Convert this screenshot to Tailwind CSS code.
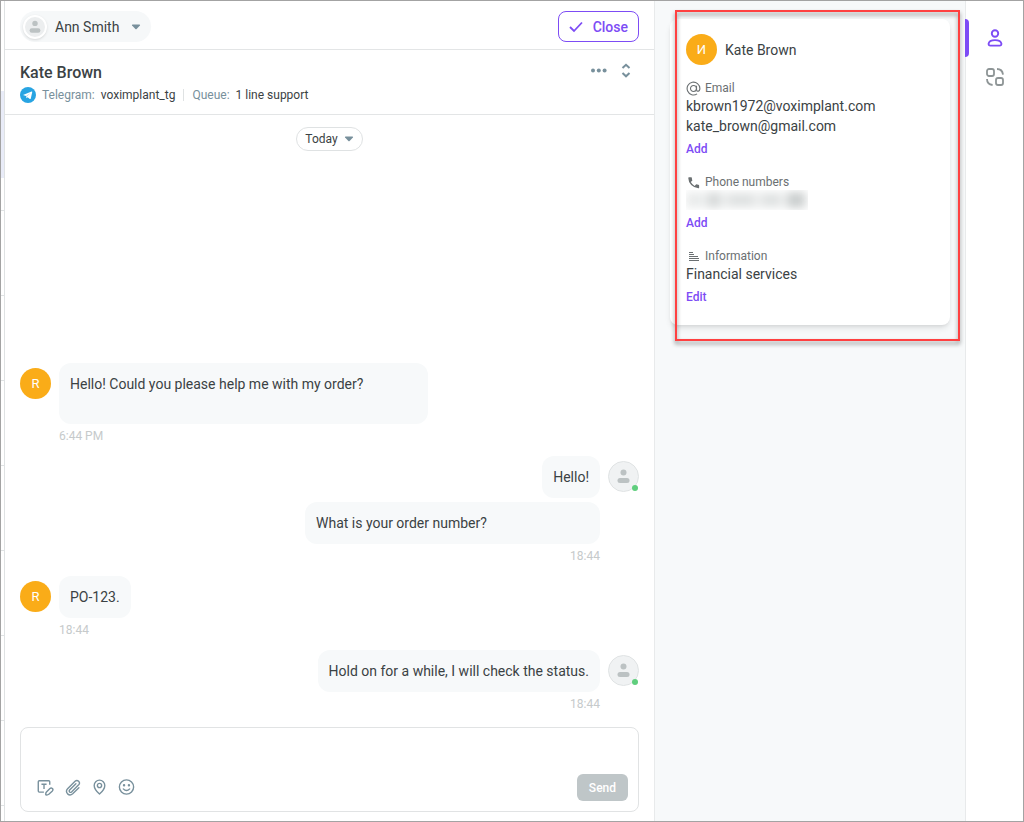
<!DOCTYPE html>
<html lang="en">
<head>
<meta charset="utf-8">
<meta name="viewport" content="width=device-width, initial-scale=1">
<title>Conversation with Kate Brown</title>
<script src="https://cdn.jsdelivr.net/npm/@tailwindcss/browser@4"></script>
</head>
<body class="flex min-h-screen border border-[#a3a3a3] bg-white font-['Roboto',sans-serif] text-sm leading-5 text-[#3b4244]">
<svg class="hidden" aria-hidden="true">
  <symbol id="person" viewBox="0 0 31 31">
    <circle cx="15.5" cy="11.5" r="3" fill="#bcc2c3"/>
    <rect x="9.5" y="17" width="12" height="5" rx="2.5" fill="#bcc2c3"/>
  </symbol>
</svg>

<!-- Edge of the conversation list -->
<div class="flex w-1 shrink-0 flex-col overflow-hidden border-r border-[#dfe2e3] bg-white" aria-hidden="true">
  <div class="h-[90px] shrink-0"></div>
  <div class="h-[87px] shrink-0 bg-[#e9ecf8]"></div>
  <div class="h-[33px] shrink-0 border-b border-[#dfe2e3]"></div>
  <div class="h-[85px] shrink-0 border-b border-[#dfe2e3]"></div>
  <div class="h-[85px] shrink-0 border-b border-[#dfe2e3]"></div>
  <div class="h-[85px] shrink-0 border-b border-[#dfe2e3]"></div>
  <div class="h-[85px] shrink-0 border-b border-[#dfe2e3]"></div>
  <div class="h-[85px] shrink-0 border-b border-[#dfe2e3]"></div>
  <div class="h-[85px] shrink-0 border-b border-[#dfe2e3]"></div>
  <div class="h-[85px] shrink-0 border-b border-[#dfe2e3]"></div>
</div>

<main class="flex min-w-0 flex-1 flex-col">
  <header class="flex h-[49px] items-center justify-between border-b border-[#e3e5e6] px-[15px] pt-[3px]">
    <button type="button" class="flex h-[31px] items-center rounded-full bg-[#f6f8f9] pr-2.5 pl-[3px]">
      <span class="flex size-6 items-center justify-center rounded-full border-2 border-white bg-[#eceeef] shadow">
        <svg class="size-7 shrink-0" aria-hidden="true"><use href="#person"/></svg>
      </span>
      <span class="ml-2">Ann Smith</span>
      <svg class="ml-3 h-1.5 w-2.5" viewBox="0 0 10 6" fill="#78909c" aria-hidden="true"><path d="M1.500.5h7q1 .3.400 1L5.600 5.100q-.6.500-1.200 0L1.100 1.500Q.5.800 1.500.5z"/></svg>
    </button>
    <button type="button" class="flex h-[31px] items-center gap-2 rounded-lg border border-[#7d4cf5] px-2.5 font-medium text-[#7d4cf5]">
      <svg class="h-4 w-4" viewBox="0 0 16 16" fill="none" stroke="currentColor" stroke-width="1.800" aria-hidden="true"><path d="M1 8l4 4L13 3.500"/></svg>
      Close
    </button>
  </header>

  <section class="flex h-[65px] items-start justify-between border-b border-[#e3e5e6] pt-[13px] pr-[22px] pl-[15px]">
    <div>
      <h1 class="text-base leading-5 font-medium">Kate Brown</h1>
      <p class="mt-1 flex h-4 items-center text-xs leading-4">
        <svg class="mr-1.5 size-4" viewBox="0 0 16 16" aria-hidden="true"><circle cx="8" cy="8" r="8" fill="#28a4e2"/><path d="M3 7.900l8.600-3.400q.8-.2.6.7l-1.400 6.300q-.3.900-1 .4L7.600 10.300l-1.100 1-.5-2.300z" fill="#fff"/><path d="M6 9l4.500-3-3.600 3.500-.4 1.800z" fill="#a9d8f2"/></svg>
        <span class="text-[#78909c]">Telegram:</span>
        <span class="ml-1.5">voximplant_tg</span>
        <span class="mx-2 h-3 w-px bg-[#dfe2e3]"></span>
        <span class="text-[#78909c]">Queue:</span>
        <span class="ml-1.5">1 line support</span>
      </p>
    </div>
    <div class="flex items-center gap-3 text-[#78909c]">
      <button type="button" aria-label="More actions"><svg class="h-[18px] w-[18px]" viewBox="0 0 18 18" fill="currentColor" aria-hidden="true"><circle cx="3" cy="7.500" r="2"/><circle cx="8.800" cy="7.500" r="2"/><circle cx="14.600" cy="7.500" r="2"/></svg></button>
      <button type="button" aria-label="Expand"><svg class="h-[18px] w-3" viewBox="0 0 12 18" fill="none" stroke="currentColor" stroke-width="2" aria-hidden="true"><path d="M2.500 5L6 1.800 9.500 5M2.500 10L6 13.300 9.500 10"/></svg></button>
    </div>
  </section>

  <section class="flex flex-1 flex-col px-[15px] pt-3 pb-[9px]" aria-label="Messages">
    <button type="button" class="flex h-6 items-center gap-1.5 self-center rounded-full border border-[#dfe2e3] px-2 text-xs">
      Today
      <svg class="h-1.5 w-2.5" viewBox="0 0 10 6" fill="#78909c" aria-hidden="true"><path d="M1.500.5h7q1 .3.400 1L5.600 5.100q-.6.500-1.200 0L1.100 1.500Q.5.800 1.500.5z"/></svg>
    </button>

    <div class="mt-auto flex flex-col gap-3">
      <article class="flex items-start gap-2">
        <span class="mt-[5px] flex size-[31px] items-center justify-center rounded-full bg-[#faac18] text-[13px] text-white">R</span>
        <div>
          <p class="h-[61px] w-[369px] rounded-xl bg-[#f7f9fa] px-[11px] pt-[11px]">Hello! Could you please help me with my order?</p>
          <time class="mt-1 block text-xs leading-4 text-[#c6cacb]">6:44 PM</time>
        </div>
      </article>

      <article class="flex items-start justify-end gap-2">
        <div class="flex flex-col items-end">
          <p class="rounded-xl bg-[#f7f9fa] px-[11px] py-[11px]">Hello!</p>
          <p class="mt-1 w-[295px] rounded-xl bg-[#f7f9fa] px-[11px] py-[11px]">What is your order number?</p>
          <time class="mt-1 block text-xs leading-4 text-[#c6cacb]">18:44</time>
        </div>
        <span class="relative mt-[5px] size-[31px] rounded-full border border-[#e0e3e4] bg-[#f0f2f3]">
          <svg class="-m-px size-[31px]" aria-hidden="true"><use href="#person"/></svg>
          <span class="absolute right-0 bottom-0 size-1.5 rounded-full bg-[#5fce7d]"></span>
        </span>
      </article>

      <article class="flex items-start gap-2">
        <span class="mt-[5px] flex size-[31px] items-center justify-center rounded-full bg-[#faac18] text-[13px] text-white">R</span>
        <div>
          <p class="rounded-xl bg-[#f7f9fa] px-[11px] py-[11px]">PO-123.</p>
          <time class="mt-1 block text-xs leading-4 text-[#c6cacb]">18:44</time>
        </div>
      </article>

      <article class="flex items-start justify-end gap-2">
        <div class="flex flex-col items-end">
          <p class="rounded-xl bg-[#f7f9fa] px-[11px] py-[11px]">Hold on for a while, I will check the status.</p>
          <time class="mt-1 block text-xs leading-4 text-[#c6cacb]">18:44</time>
        </div>
        <span class="relative mt-[5px] size-[31px] rounded-full border border-[#e0e3e4] bg-[#f0f2f3]">
          <svg class="-m-px size-[31px]" aria-hidden="true"><use href="#person"/></svg>
          <span class="absolute right-0 bottom-0 size-1.5 rounded-full bg-[#5fce7d]"></span>
        </span>
      </article>
    </div>

    <form class="mt-[15px] flex h-[85px] flex-col rounded-lg border border-[#e1e3e4] pr-2.5 pb-2.5 pl-4" onsubmit="return false">
      <textarea aria-label="Message" class="min-h-0 w-full flex-1 resize-none pt-2 outline-none"></textarea>
      <div class="flex items-center justify-between text-[#78909c]">
        <div class="flex gap-2.5">
          <button type="button" aria-label="Templates"><svg class="size-[17px]" viewBox="0 0 16 16" fill="none" stroke="currentColor" stroke-width="1.300" stroke-linejoin="round" aria-hidden="true"><path d="M12 5.500V2.600q0-1-1-1H2.200q-1 0-1 1v8.800q0 1 1 1h4.300M4.200 5h4.800M6.600 5v4.500" /><path d="M8.300 14.900q-.3-1.600.6-2.600l3.300-3.400q1.100-1 2.300 0 1 1.200 0 2.300l-3.400 3.200q-1.200.9-2.800.5z"/></svg></button>
          <button type="button" aria-label="Attach file"><svg class="size-[17px]" viewBox="0 0 16 16" fill="none" stroke="currentColor" stroke-width="1.300" stroke-linecap="round" aria-hidden="true"><path d="M14 8.200l-5.800 5.700q-2.500 2.100-4.800.1-2.200-2.300 0-4.900l7-7q1.700-1.500 3.400 0 1.600 1.700 0 3.400l-6.700 6.700q-.9.800-1.800 0-.8-.9 0-1.800l5.900-5.900"/></svg></button>
          <button type="button" aria-label="Share location"><svg class="size-[17px]" viewBox="0 0 16 16" fill="none" stroke="currentColor" stroke-width="1.300" stroke-linejoin="round" aria-hidden="true"><path d="M8 14.200Q3 9.800 3 6.100a5 5 0 0 1 10 0Q13 9.800 8 14.200z"/><circle cx="8" cy="6.100" r="2"/></svg></button>
          <button type="button" aria-label="Emoji"><svg class="size-[17px]" viewBox="0 0 16 16" fill="none" stroke="currentColor" stroke-width="1.300" stroke-linecap="round" aria-hidden="true"><circle cx="8" cy="7.500" r="6.700"/><path d="M5 9.300Q8 12.400 11 9.300"/><circle cx="5.700" cy="5.800" r=".5" fill="currentColor"/><circle cx="10.300" cy="5.800" r=".5" fill="currentColor"/></svg></button>
        </div>
        <button type="submit" disabled class="h-[27px] rounded-md bg-[#bfc6c8] px-3 text-xs font-medium text-white">Send</button>
      </div>
    </form>
  </section>
</main>

<aside class="relative w-[312px] shrink-0 border-x border-[#e8eaeb] bg-[#f7f9fa] px-[15px] pt-[18px]" aria-label="Client card">
  <section class="rounded-lg bg-white px-4 pt-[15px] pb-5 shadow-md">
    <div class="flex items-center gap-2">
      <span class="flex size-[31px] items-center justify-center rounded-full bg-[#faac18] text-[13px] text-white">И</span>
      <h2>Kate Brown</h2>
    </div>
    <h3 class="mt-[15px] flex h-4 items-center gap-1 text-xs text-[#6b7072]">
      <svg class="size-[15px]" viewBox="0 0 16 16" fill="none" stroke="currentColor" stroke-width="1.200" aria-hidden="true"><circle cx="8" cy="8" r="3.200"/><path d="M11.200 5v4q0 2 1.700 2 1.900-.3 1.900-3A6.800 6.800 0 1 0 11.800 13.700"/></svg>
      Email
    </h3>
    <p>kbrown1972@voximplant.com</p>
    <p>kate_brown@gmail.com</p>
    <button type="button" class="mt-[5px] block text-xs leading-4 font-medium text-[#7d4cf5]">Add</button>
    <h3 class="mt-[17px] flex h-4 items-center gap-1 text-xs text-[#6b7072]">
      <svg class="size-[15px]" viewBox="0 0 16 16" fill="currentColor" aria-hidden="true"><path d="M3.200 2.500h2.500q.5.100.6 1 .1 1.300.5 2.300L5.100 7.500q1.500 2.700 4.100 4.100l1.700-1.700 2.300.5q.7.100.8.700v2.400q-.1.600-.7.600Q8.600 13.800 5.600 10.700 2.500 7.600 2.400 3.200q0-.6.800-.7z"/></svg>
      Phone numbers
    </h3>
    <div class="flex h-5 w-[122px] items-center overflow-hidden" role="img" aria-label="Hidden phone number">
      <div class="flex h-4 w-full items-center justify-between bg-[#eceeee] blur-[4px]">
        <span class="h-3 w-3 bg-[#e9ebeb]"></span>
        <span class="h-4 w-3 bg-[#d8dbdb]"></span>
        <span class="h-3 w-6 bg-[#dfe2e2]"></span>
        <span class="h-3 w-4 bg-[#dfe2e2]"></span>
        <span class="mr-1 h-4 w-4 bg-[#cbcfcf]"></span>
      </div>
    </div>
    <button type="button" class="mt-[5px] block text-xs leading-4 font-medium text-[#7d4cf5]">Add</button>
    <h3 class="mt-[17px] flex h-4 items-center gap-1 text-xs text-[#6b7072]">
      <svg class="size-[15px]" viewBox="0 0 15 15" stroke="currentColor" stroke-width="1" aria-hidden="true"><path d="M3 3.500h4M3 5.500h5M3 7.500h9M3 9.500h10M3 11.500h10"/></svg>
      Information
    </h3>
    <p>Financial services</p>
    <button type="button" class="mt-[5px] block text-xs leading-4 font-medium text-[#7d4cf5]">Edit</button>
  </section>
  <!-- Callout frame over the card -->
  <div class="pointer-events-none absolute top-[9px] right-[5px] left-5 h-[331px] border-2 border-[#ff4040] drop-shadow-[0_3px_2px_rgba(0,0,0,0.45)]"></div>
</aside>

<nav class="relative flex w-[57px] shrink-0 flex-col items-center gap-[19px] pt-[27px] pl-px" aria-label="Panels">
  <span class="absolute top-[18px] -left-px h-[38px] w-1 rounded-r bg-[#7d4cf5]"></span>
  <button type="button" aria-label="Client" class="text-[#7d4cf5]"><svg class="size-5" viewBox="0 0 20 20" fill="none" stroke="currentColor" stroke-width="1.900" aria-hidden="true"><circle cx="10" cy="5.500" r="3.200"/><path d="M3.600 15.600q.6-3.500 6.400-3.500t6.400 3.500q.1 2-1.800 2H5.400q-1.900 0-1.800-2z"/></svg></button>
  <button type="button" aria-label="Integrations" class="text-[#8e9596]"><svg class="size-5" viewBox="0 0 20 20" fill="none" stroke="currentColor" stroke-width="1.800" aria-hidden="true"><rect x="2" y="2" width="7" height="7" rx="2"/><rect x="11" y="11" width="7" height="7" rx="2"/><path d="M12 2q5.300 0 6 5.600M2 12q0 5.300 5.600 6"/></svg></button>
</nav>
</body>
</html>
